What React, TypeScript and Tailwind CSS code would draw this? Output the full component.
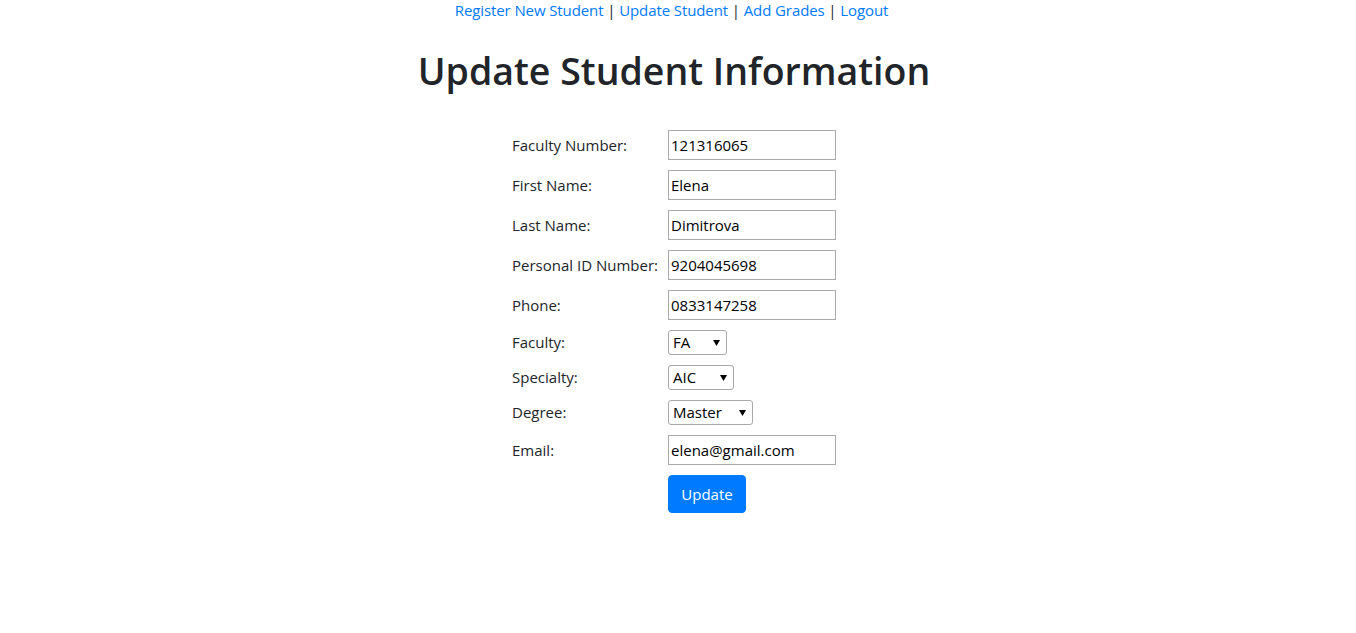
import React from "react";

const font = { fontFamily: '"Open Sans", "Noto Sans", sans-serif' };

function TextRow({ label, value }: { label: string; value: string }) {
  return (
    <div className="flex items-center h-[40px]">
      <div className="w-[156px] whitespace-nowrap text-[15px] text-[#212529]">{label}</div>
      <input
        readOnly
        value={value}
        className="w-[168px] h-[30px] border border-[#a9a9a9] px-[2px] text-[15px] text-black outline-none"
        style={font}
      />
    </div>
  );
}

function SelectRow({ label, value, width }: { label: string; value: string; width: string }) {
  return (
    <div className="flex items-center h-[35px]">
      <div className="w-[156px] whitespace-nowrap text-[15px] text-[#212529]">{label}</div>
      <div
        className={`${width} h-[25px] border border-[#a9a9a9] rounded-[3px] flex items-center justify-between pl-[4px] pr-[6px] text-[15px] text-black`}
      >
        <span>{value}</span>
        <svg width="7" height="6" viewBox="0 0 7 6">
          <path d="M0 0 H7 L3.5 6 Z" fill="#000" />
        </svg>
      </div>
    </div>
  );
}

export default function App() {
  return (
    <div className="min-h-[633px] bg-white flex flex-col items-center" style={font}>
      <div className="text-[15px] tracking-[-0.1px] leading-[20px] text-[#212529] h-[20px] whitespace-nowrap ml-[-13px]">
        <a className="text-[#007bff]">Register New Student</a> |{" "}
        <a className="text-[#007bff]">Update Student</a> |{" "}
        <a className="text-[#007bff]">Add Grades</a> |{" "}
        <a className="text-[#007bff]">Logout</a>
      </div>
      <h1 className="mt-[27px] ml-[-8px] text-[37.5px] leading-[48px] font-semibold text-[#212529]">
        Update Student Information
      </h1>
      <div className="mt-[30px] ml-[-8px] flex flex-col">
        <TextRow label="Faculty Number:" value="121316065" />
        <TextRow label="First Name:" value="Elena" />
        <TextRow label="Last Name:" value="Dimitrova" />
        <TextRow label="Personal ID Number:" value="9204045698" />
        <TextRow label="Phone:" value="0833147258" />
        <SelectRow label="Faculty:" value="FA" width="w-[59px]" />
        <SelectRow label="Specialty:" value="AIC" width="w-[66px]" />
        <SelectRow label="Degree:" value="Master" width="w-[85px]" />
        <TextRow label="Email:" value="elena@gmail.com" />
        <div className="flex mt-[5px]">
          <div className="w-[156px]" />
          <button className="h-[38px] w-[78px] rounded-[4px] bg-[#007bff] text-white text-[15px] border border-[#007bff]">
            Update
          </button>
        </div>
      </div>
    </div>
  );
}
